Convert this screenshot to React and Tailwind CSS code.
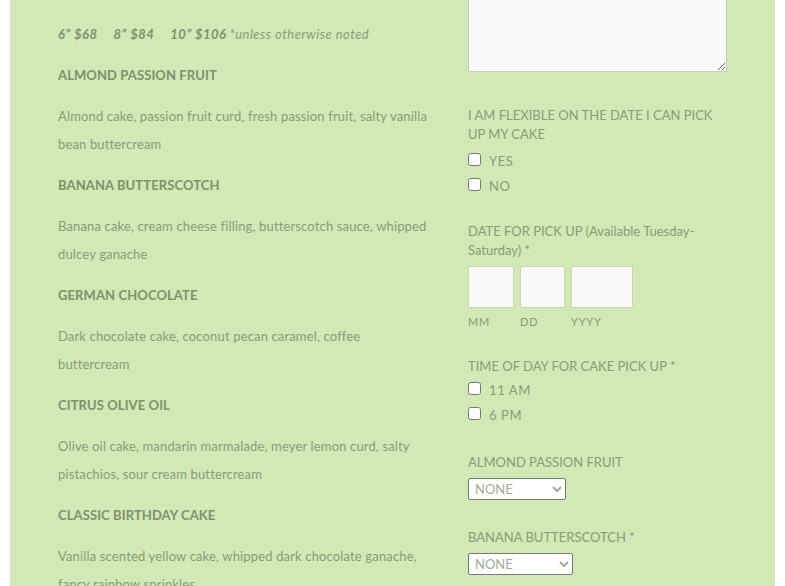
const flavours = [
  {
    name: 'ALMOND PASSION FRUIT',
    desc: 'Almond cake, passion fruit curd, fresh passion fruit, salty vanilla bean buttercream',
  },
  {
    name: 'BANANA BUTTERSCOTCH',
    desc: 'Banana cake, cream cheese filling, butterscotch sauce, whipped dulcey ganache',
  },
  {
    name: 'GERMAN CHOCOLATE',
    desc: 'Dark chocolate cake, coconut pecan caramel, coffee buttercream',
  },
  {
    name: 'CITRUS OLIVE OIL',
    desc: 'Olive oil cake, mandarin marmalade, meyer lemon curd, salty pistachios, sour cream buttercream',
  },
  {
    name: 'CLASSIC BIRTHDAY CAKE',
    desc: 'Vanilla scented yellow cake, whipped dark chocolate ganache, fancy rainbow sprinkles',
  },
];

const prices = ['6” $68', '8” $84', '10” $106'];

const Check = ({ label }) => (
  <label className="flex items-center h-[25px] text-[13px] tracking-[0.6px] text-[#8a9c7b]">
    <input type="checkbox" className="w-[13px] h-[13px] m-0 mr-[8px] -mt-[5px]" />
    {label}
  </label>
);

const Label = ({ children }) => (
  <p className="text-[13px] leading-[19px] tracking-[0px] text-[#8a9c7b]">{children}</p>
);

const Select = ({ w }) => (
  <select className={`${w} h-[22px] mt-[6px] text-[13px] text-[#a3ab98] bg-white border border-[#7a7a7a] rounded-[2px] pl-[2px]`}>
    <option>NONE</option>
  </select>
);

export default function App() {
  return (
    <div className="h-[586px] overflow-hidden bg-white px-[10px]" style={{ fontFamily: 'Lato, "Open Sans", sans-serif' }}>
      <div className="h-full bg-[#d1e9b4] flex pl-[48px]">
        <div className="w-[374px] pt-[20px] text-[#8a9c7b]">
          <p className="flex text-[13px] leading-[28px] mb-[13px] whitespace-nowrap">
            {prices.map((p, i) => (
              <span key={p} className={`font-bold italic text-[#7f916f] tracking-[0.5px] ${i < 2 ? 'mr-[16px]' : 'mr-[3px]'}`}>{p}</span>
            ))}
            <span className="italic tracking-[0.5px]">*unless otherwise noted</span>
          </p>
          {flavours.map((f) => (
            <div key={f.name}>
              <p className="text-[13px] leading-[28px] mb-[13px] font-bold text-[#7f916f] tracking-[0.1px]">{f.name}</p>
              <p className="text-[13px] leading-[28px] mb-[13px] tracking-[0.15px]">{f.desc}</p>
            </div>
          ))}
        </div>
        <div className="ml-[36px] w-[262px]">
          <textarea className="block w-[259px] h-[102px] -mt-[30px] bg-[#f9f9f9] border border-[#c5cbbd] resize-y" />
          <div className="mt-[34px]">
            <Label>
              I AM FLEXIBLE ON THE DATE I CAN PICK UP MY CAKE
            </Label>
            <div className="mt-[5px]">
              <Check label="YES" />
              <Check label="NO" />
            </div>
          </div>
          <div className="mt-[23px]">
            <Label>DATE FOR PICK UP (Available Tuesday-Saturday) *</Label>
            <div className="flex gap-[5px] mt-[6px]">
              {[
                { l: 'MM', w: 'w-[46px]' },
                { l: 'DD', w: 'w-[45px]' },
                { l: 'YYYY', w: 'w-[62px]' },
              ].map((d) => (
                <div key={d.l} className={`${d.w} mr-[1px]`}>
                  <input className="block w-full h-[42px] bg-[#f9f9f9] border border-[#c9d6bb] rounded-[1px]" />
                  <p className="text-[11px] tracking-[0.8px] mt-[6px] text-[#8a9c7b]">{d.l}</p>
                </div>
              ))}
            </div>
          </div>
          <div className="mt-[26px]">
            <Label>TIME OF DAY FOR CAKE PICK UP *</Label>
            <div className="mt-[3px]">
              <Check label="11 AM" />
              <Check label="6 PM" />
            </div>
          </div>
          <div className="mt-[24px]">
            <Label>ALMOND PASSION FRUIT</Label>
            <Select w="w-[98px]" />
          </div>
          <div className="mt-[28px]">
            <Label>BANANA BUTTERSCOTCH *</Label>
            <Select w="w-[105px]" />
          </div>
        </div>
      </div>
    </div>
  );
}
